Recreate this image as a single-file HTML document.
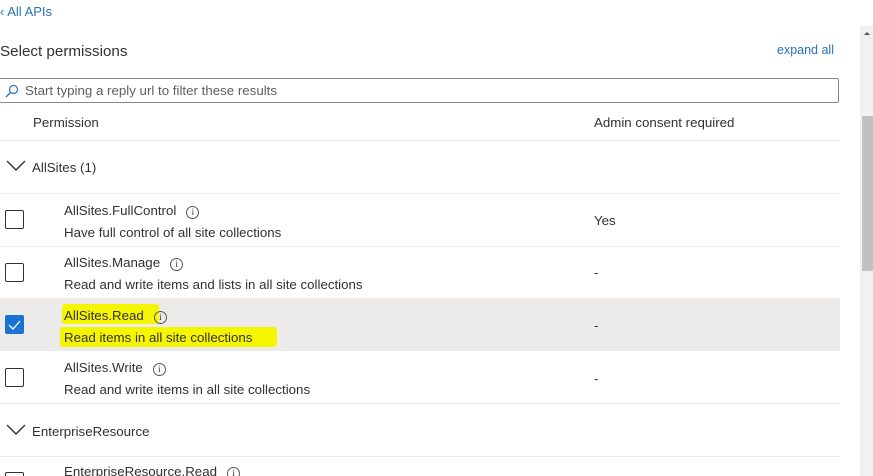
<!DOCTYPE html>
<html><head><meta charset="utf-8"><style>
*{margin:0;padding:0;box-sizing:border-box}
html,body{width:873px;height:476px;overflow:hidden}
body{background:#fff;font-family:"Liberation Sans",sans-serif;color:#323130;position:relative}
.a{position:absolute;white-space:nowrap}
.line{position:absolute;left:0;width:840px;height:1px;background:#edebe9}
.cb{position:absolute;left:5px;width:19px;height:19px;border:1px solid #323130;border-radius:2px;background:#fff}
.t{font-size:13.3px;color:#323130}
.info{display:inline-block;width:13px;height:13px;border:1px solid #555;border-radius:50%;font-size:9px;line-height:11px;text-align:center;margin-left:10px;vertical-align:0px;font-family:"Liberation Serif",serif}
.hl{background:#f5f500}
</style></head><body>
<div class="a" style="left:0;top:4px;font-size:13px;color:#2b73b5">‹ All APIs</div>
<div class="a" style="left:0;top:43px;font-size:15.2px;color:#323130">Select permissions</div>
<div class="a" style="left:777px;top:43px;font-size:12.5px;color:#2b73b5">expand all</div>
<div class="a" style="left:-2px;top:78px;width:841px;height:25px;border:1px solid #8a8886;border-radius:2px"></div>
<svg class="a" style="left:5px;top:84px" width="14" height="14" viewBox="0 0 14 14"><circle cx="8.5" cy="5.5" r="4" fill="none" stroke="#2b73b5" stroke-width="1.2"/><path d="M5.5 8.5 L1 13" stroke="#2b73b5" stroke-width="1.3"/></svg>
<div class="a t" style="left:25px;top:83px;color:#605e5c">Start typing a reply url to filter these results</div>
<div class="a t" style="left:33px;top:115px">Permission</div>
<div class="a t" style="left:594px;top:115px">Admin consent required</div>
<div class="line" style="top:140px"></div>
<svg class="a" style="left:6px;top:160px" width="20" height="12"><path d="M1 1 L10 10 L19 1" fill="none" stroke="#323130" stroke-width="1.4"/></svg>
<div class="a t" style="left:32px;top:160px">AllSites (1)</div>
<div class="line" style="top:193px"></div>
<div class="cb" style="top:210px"></div>
<div class="a t" style="left:64px;top:203px">AllSites.FullControl<span class="info">i</span></div>
<div class="a t" style="left:64px;top:225px">Have full control of all site collections</div>
<div class="a t" style="left:594px;top:213px">Yes</div>
<div class="line" style="top:246px"></div>
<div class="cb" style="top:263px"></div>
<div class="a t" style="left:64px;top:255px">AllSites.Manage<span class="info">i</span></div>
<div class="a t" style="left:64px;top:277px">Read and write items and lists in all site collections</div>
<div class="a t" style="left:594px;top:265px">-</div>
<div class="a" style="left:0;top:298px;width:840px;height:53px;background:#edebe9"></div>
<div class="a" style="left:5px;top:315px;width:19px;height:19px;background:#1a73d1;border-radius:2px"><svg width="19" height="19"><path d="M4 10 L8 14 L15 6" fill="none" stroke="#fff" stroke-width="1.3"/></svg></div>
<div class="a hl" style="left:62px;top:304px;width:97px;height:20px;border-radius:3px"></div>
<div class="a hl" style="left:60px;top:327px;width:217px;height:20px;border-radius:3px"></div>
<div class="a t" style="left:64px;top:308px">AllSites.Read<span class="info">i</span></div>
<div class="a t" style="left:64px;top:330px">Read items in all site collections</div>
<div class="a t" style="left:594px;top:318px">-</div>
<div class="cb" style="top:368px"></div>
<div class="a t" style="left:64px;top:360px">AllSites.Write<span class="info">i</span></div>
<div class="a t" style="left:64px;top:382px">Read and write items in all site collections</div>
<div class="a t" style="left:594px;top:371px">-</div>
<div class="line" style="top:403px"></div>
<svg class="a" style="left:6px;top:424px" width="20" height="12"><path d="M1 1 L10 10 L19 1" fill="none" stroke="#323130" stroke-width="1.4"/></svg>
<div class="a t" style="left:32px;top:424px">EnterpriseResource</div>
<div class="line" style="top:456px"></div>
<div class="cb" style="top:472px"></div>
<div class="a t" style="left:64px;top:464px">EnterpriseResource.Read<span class="info">i</span></div>
<div class="a" style="left:860px;top:26px;width:13px;height:450px;background:#f1f1f1"></div>
<div class="a" style="left:862px;top:116px;width:11px;height:155px;background:#c1c1c1"></div>
<div class="a" style="left:864px;top:32px;width:0;height:0;border-left:3px solid transparent;border-right:3px solid transparent;border-bottom:3px solid #555"></div>
</body></html>
